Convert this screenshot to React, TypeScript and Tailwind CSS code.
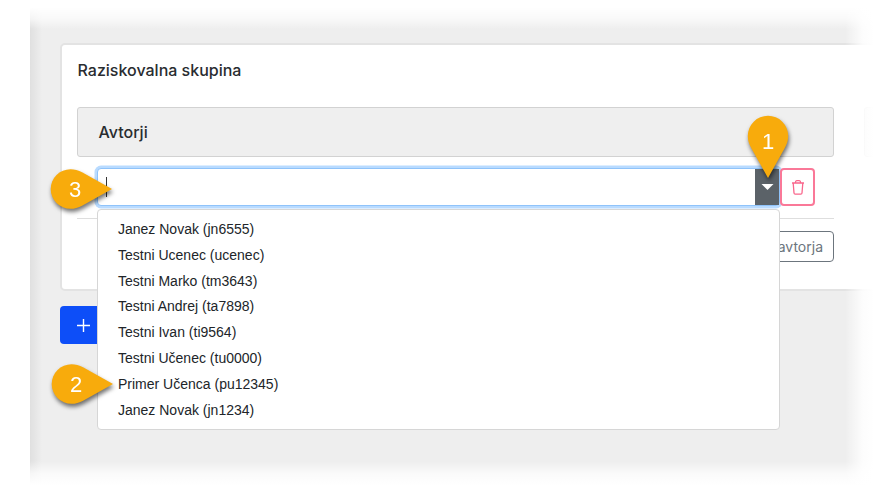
import { useState } from 'react';

interface Author {
  name: string;
  username: string;
}

const AUTHORS: Author[] = [
  { name: 'Janez Novak', username: 'jn6555' },
  { name: 'Testni Ucenec', username: 'ucenec' },
  { name: 'Testni Marko', username: 'tm3643' },
  { name: 'Testni Andrej', username: 'ta7898' },
  { name: 'Testni Ivan', username: 'ti9564' },
  { name: 'Testni Učenec', username: 'tu0000' },
  { name: 'Primer Učenca', username: 'pu12345' },
  { name: 'Janez Novak', username: 'jn1234' },
];

function TrashIcon() {
  return (
    <svg className="w-[12px] h-[15px]" viewBox="0 0 12 15" fill="none" stroke="currentColor" strokeWidth="1.3" strokeLinejoin="round">
      <path d="M0 3h12M3.3 2.900Q3.500.7 4.700.7h2.600q1.200 0 1.400 2.200M1.200 3.200l.8 9.800q.1 1.200 1.200 1.200h5.600q1.100 0 1.200-1.200l.8-9.800" />
    </svg>
  );
}

function PinDown({ label }: { label: string }) {
  return (
    <svg className="absolute z-20 left-[742px] top-[112px] w-[52px] h-[74px] drop-shadow-[1px_3px_2px_rgba(0,0,0,0.55)]" viewBox="0 0 52 74">
      <path d="M26 66L9.500 36.500C7 32 5.800 28.500 5.800 24A20.200 20.200 0 0 1 46.200 24C46.200 28.500 45 32 42.500 36.500Z" fill="#f8ab0c" />
      <text x="26" y="37" textAnchor="middle" fill="#fff" fontSize="22" className="font-['Liberation_Sans',sans-serif]">{label}</text>
    </svg>
  );
}

function PinRight({ label, className }: { label: string; className: string }) {
  return (
    <svg className={`absolute z-20 w-[72px] h-[52px] drop-shadow-[1px_3px_2px_rgba(0,0,0,0.55)] ${className}`} viewBox="0 0 72 52">
      <path d="M66 26L36.500 42.500C32 45 28.500 45.800 24.500 45.800A19.800 19.800 0 0 1 24.500 6.200C28.500 6.200 32 7 36.500 9.500Z" fill="#f8ab0c" />
      <text x="29" y="33.500" textAnchor="middle" fill="#fff" fontSize="22" className="font-['Liberation_Sans',sans-serif]">{label}</text>
    </svg>
  );
}

export default function App() {
  const [open, setOpen] = useState(true);
  const [query, setQuery] = useState('');

  return (
    <div className="relative w-[877px] h-[491px] overflow-hidden bg-white pl-[30px] font-['Inter',sans-serif] text-[#292c30]">
      <div className="h-full bg-[#eeeeee] pt-[43px] pl-[30px]">
        <section className="flex w-[900px] h-[248px] rounded-[5px] border-2 border-[#e3e3e3] bg-white pl-[15px]">
          <div className="w-[757px]">
            <h2 className="pt-[13px] pl-[0.5px] text-[16px] leading-6 font-medium">Raziskovalna skupina</h2>
            <div className="mt-[25px] flex h-[50px] items-center rounded-[3px] border border-[#d2d2d2] bg-[#efefef] pl-[20.5px] text-[16px] font-medium">
              Avtorji
            </div>

            <div className="ml-5 mt-[10px] flex h-[40px] items-center">
              <div className="relative flex h-[38px] w-[683px] rounded-[4px] border border-[#8fc3fa] bg-white ring-[2.5px] ring-[#b9dbff]">
                <input
                  value={query}
                  onChange={(e) => setQuery(e.target.value)}
                  className="min-w-0 flex-1 rounded-l-[4px] px-2 outline-none"
                />
                <span className="absolute left-[8px] top-[8px] h-5 w-px bg-[#333]" />
                <button className="flex w-6 items-center justify-center bg-[#5b6268]" onClick={() => setOpen(!open)}>
                  <svg className="w-[13px] h-[6px] text-white" viewBox="0 0 12 6" fill="currentColor">
                    <path d="M0 0h12L6 6z" />
                  </svg>
                </button>

                {open && (
                  <ul className="absolute -left-px top-[40px] z-10 h-[221px] w-[683px] rounded-[4px] border border-[#d6d6d6] bg-white pt-[7px] font-['Liberation_Sans',sans-serif] text-[14px] text-[#212529]">
                    {AUTHORS.map((author) => (
                      <li key={author.username} className="h-[25.8px] cursor-pointer pl-5 leading-[25.8px]">
                        {author.name} ({author.username})
                      </li>
                    ))}
                  </ul>
                )}
              </div>
              <button className="relative flex h-[38px] w-[35px] shrink-0 items-center justify-center rounded-[4px] border-2 border-[#fa7898] bg-white text-[#f9668c]">
                <TrashIcon />
              </button>
            </div>

            <div className="mt-[11px] flex justify-end border-t border-[#dedede] pt-[12px]">
              <button className="h-[31px] rounded-[4px] border border-[#6c757d] px-[10px] text-[14px] text-[#6c757d]">
                Dodaj avtorja
              </button>
            </div>
          </div>
          <div className="ml-[30px] mt-[62px] h-[50px] w-[80px] rounded-[3px] border border-[#d5d5d5] bg-[#efefef]" />
        </section>

        <button className="mt-[15px] flex h-[38px] w-[130px] items-center rounded-[4px] bg-[#0d4ef8] pl-[17px] text-white">
          <svg className="w-[13px] h-[13px]" viewBox="0 0 13 13" stroke="currentColor" strokeWidth="1.4">
            <path d="M6.500 0v13M0 6.500h13" />
          </svg>
        </button>
      </div>

      {/* Soft edges of the clipped page */}
      <div className="pointer-events-none absolute inset-y-0 left-[30px] w-[12px] bg-linear-to-r from-black/6 to-transparent" />
      <div className="pointer-events-none absolute inset-x-0 top-0 h-[29px] bg-linear-to-b from-white from-25% via-white/65 via-65% to-transparent" />
      <div className="pointer-events-none absolute inset-x-0 bottom-0 h-[30px] bg-linear-to-t from-white from-20% via-white/70 via-60% to-transparent" />
      <div className="pointer-events-none absolute inset-y-0 right-0 w-[32px] bg-linear-to-l from-white from-10% via-white/85 via-45% to-transparent" />

      <PinDown label="1" />
      <PinRight label="3" className="left-[46px] top-[163px]" />
      <PinRight label="2" className="left-[47px] top-[358px]" />
    </div>
  );
}
